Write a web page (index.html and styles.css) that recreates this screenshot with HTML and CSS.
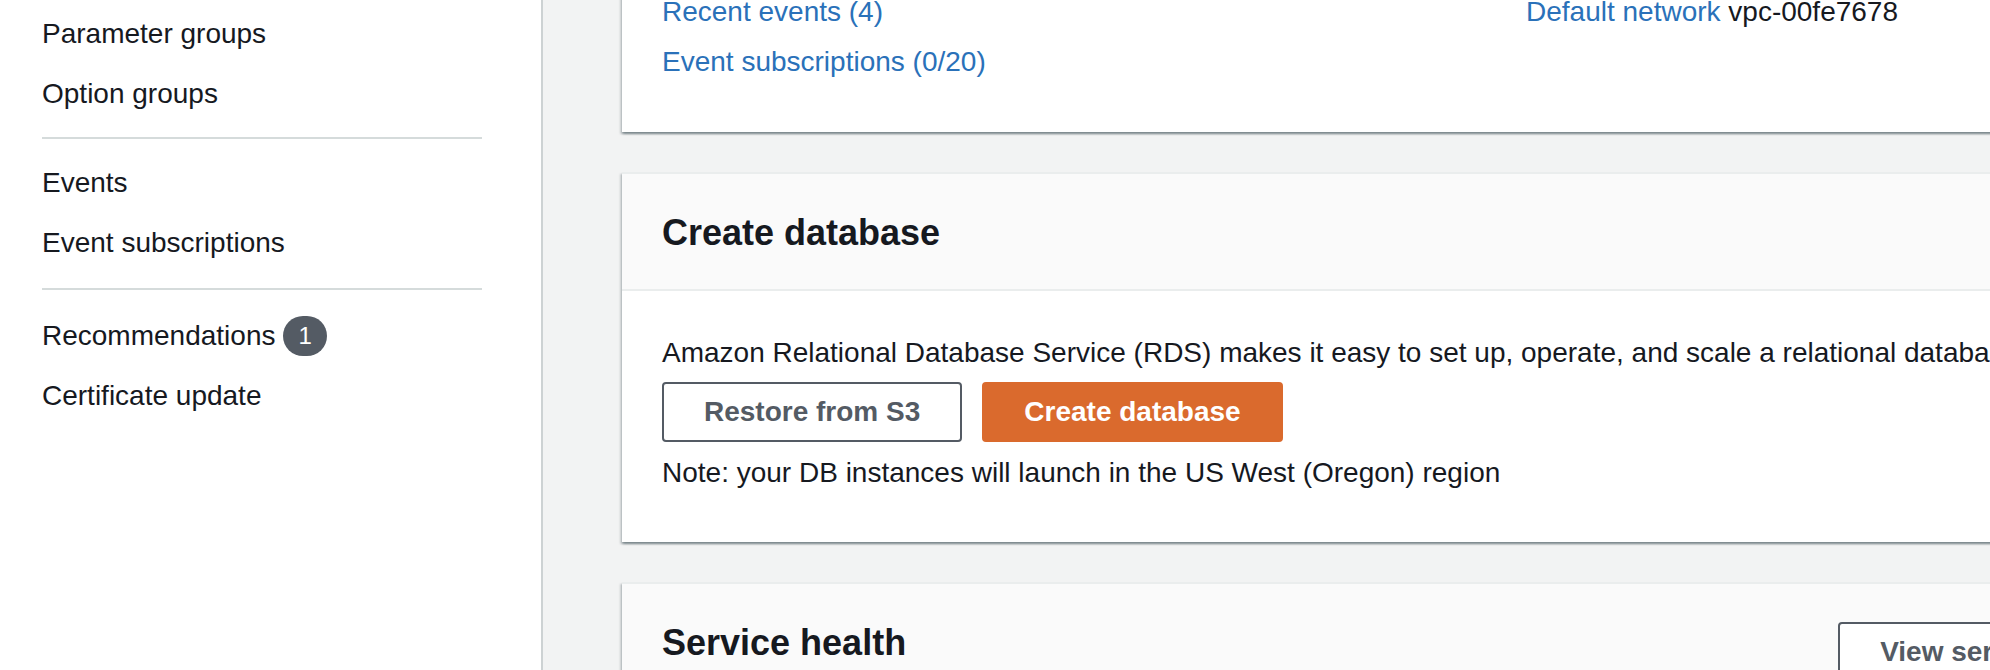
FILE: index.html
```html
<!DOCTYPE html>
<html lang="en">
<head>
<meta charset="utf-8">
<title>Amazon RDS</title>
<link rel="stylesheet" href="styles.css">
</head>
<body>
<div class="layout">
  <nav class="sidebar">
    <ul class="nav-list">
      <li class="nav-item">Parameter groups</li>
      <li class="nav-item">Option groups</li>
    </ul>
    <hr class="nav-divider nav-divider-first">
    <ul class="nav-list">
      <li class="nav-item">Events</li>
      <li class="nav-item">Event subscriptions</li>
    </ul>
    <hr class="nav-divider nav-divider-second">
    <ul class="nav-list">
      <li class="nav-item nav-item-badge">Recommendations <span class="badge">1</span></li>
      <li class="nav-item">Certificate update</li>
    </ul>
  </nav>
  <main class="content">
    <section class="card card-summary">
      <div class="summary-grid">
        <div class="summary-col">
          <a class="link" href="#">Recent events (4)</a>
          <a class="link" href="#">Event subscriptions (0/20)</a>
        </div>
        <div class="summary-col">
          <div class="summary-line"><a class="link" href="#">Default network</a> vpc-00fe7678</div>
        </div>
      </div>
    </section>

    <section class="card">
      <header class="card-header">
        <h2 class="card-title">Create database</h2>
      </header>
      <div class="card-body">
        <p class="body-text">Amazon Relational Database Service (RDS) makes it easy to set up, operate, and scale a relational database in the cloud.</p>
        <div class="actions">
          <button class="btn" type="button">Restore from S3</button>
          <button class="btn btn-primary" type="button">Create database</button>
        </div>
        <p class="body-text note">Note: your DB instances will launch in the US West (Oregon) region</p>
      </div>
    </section>

    <section class="card">
      <header class="card-header card-header-split">
        <h2 class="card-title">Service health</h2>
        <button class="btn btn-header" type="button">View service health</button>
      </header>
      <div class="card-body card-body-tall"></div>
    </section>
  </main>
</div>
</body>
</html>
```

FILE: styles.css
```css
* {
  box-sizing: border-box;
}

html, body {
  margin: 0;
  padding: 0;
}

body {
  width: 1990px;
  height: 670px;
  overflow: hidden;
  font-family: "Liberation Sans", Arial, sans-serif;
  font-size: 28px;
  color: #16191f;
  background: #f2f3f3;
}

.layout {
  display: flex;
  min-height: 670px;
}

/* Sidebar */
.sidebar {
  flex: 0 0 543px;
  width: 543px;
  background: #ffffff;
  border-right: 2px solid #cdd2d3;
  padding: 4px 0 0 42px;
}

.nav-list {
  list-style: none;
  margin: 0;
  padding: 0;
}

.nav-item {
  display: flex;
  align-items: center;
  height: 60px;
  line-height: 60px;
  white-space: nowrap;
  color: #16191f;
}

.nav-item-badge {
  height: 61px;
  line-height: 61px;
}

.badge {
  display: inline-flex;
  align-items: center;
  justify-content: center;
  height: 40px;
  padding: 0 15px;
  margin-left: 8px;
  border-radius: 20px;
  background: #545b64;
  color: #ffffff;
  font-size: 24px;
  line-height: 40px;
}

.nav-divider {
  width: 440px;
  height: 2px;
  border: 0;
  background: #d5dbdb;
  margin: 0;
}

.nav-divider-first {
  margin: 13px 0 14px;
}

.nav-divider-second {
  margin: 15px 0 15px;
}

/* Main content */
.content {
  flex: 0 0 auto;
  width: 1677px;
  padding-left: 79px;
  display: flex;
  flex-direction: column;
  gap: 40px;
}

.card {
  width: 1598px;
  background: #ffffff;
  box-shadow: 0 2px 2px 0 rgba(0, 28, 36, 0.3),
              2px 2px 2px 0 rgba(0, 28, 36, 0.15),
              -2px 2px 2px 0 rgba(0, 28, 36, 0.15);
  border-top: 2px solid #eaeded;
}

.card-summary {
  margin-top: -40px;
  padding: 27px 40px 45px;
  border-top: 0;
}

.summary-grid {
  display: grid;
  grid-template-columns: 864px 1fr;
}

.summary-col {
  display: flex;
  flex-direction: column;
}

.link {
  color: #2a71b9;
  text-decoration: none;
  line-height: 50px;
  white-space: nowrap;
}

.summary-line {
  line-height: 50px;
  white-space: nowrap;
}

.card-header {
  background: #fafafa;
  border-bottom: 2px solid #eaeded;
  padding: 37px 40px 34px;
}

.card-header-split {
  display: flex;
  justify-content: space-between;
  align-items: flex-start;
  border-bottom: 0;
  padding-bottom: 0;
  height: 100px;
}

.card-title {
  margin: 0;
  font-size: 36px;
  line-height: 44px;
  font-weight: 700;
  color: #16191f;
}

.card-body {
  padding: 40px 40px 47px;
}

.card-body-tall {
  height: 200px;
}

.body-text {
  margin: 0;
  line-height: 44px;
  white-space: nowrap;
}

.note {
  margin-top: 9px;
}

.actions {
  display: flex;
  gap: 20px;
  margin-top: 7px;
}

.btn {
  height: 60px;
  padding: 0 40px;
  border: 2px solid #545b64;
  border-radius: 4px;
  background: #ffffff;
  color: #545b64;
  font-family: "Liberation Sans", Arial, sans-serif;
  font-size: 28px;
  font-weight: 700;
  line-height: 56px;
  white-space: nowrap;
  cursor: pointer;
}

.btn-primary {
  background: #da6a2d;
  border-color: #da6a2d;
  color: #ffffff;
}

.btn-header {
  margin-top: 1px;
}
```
